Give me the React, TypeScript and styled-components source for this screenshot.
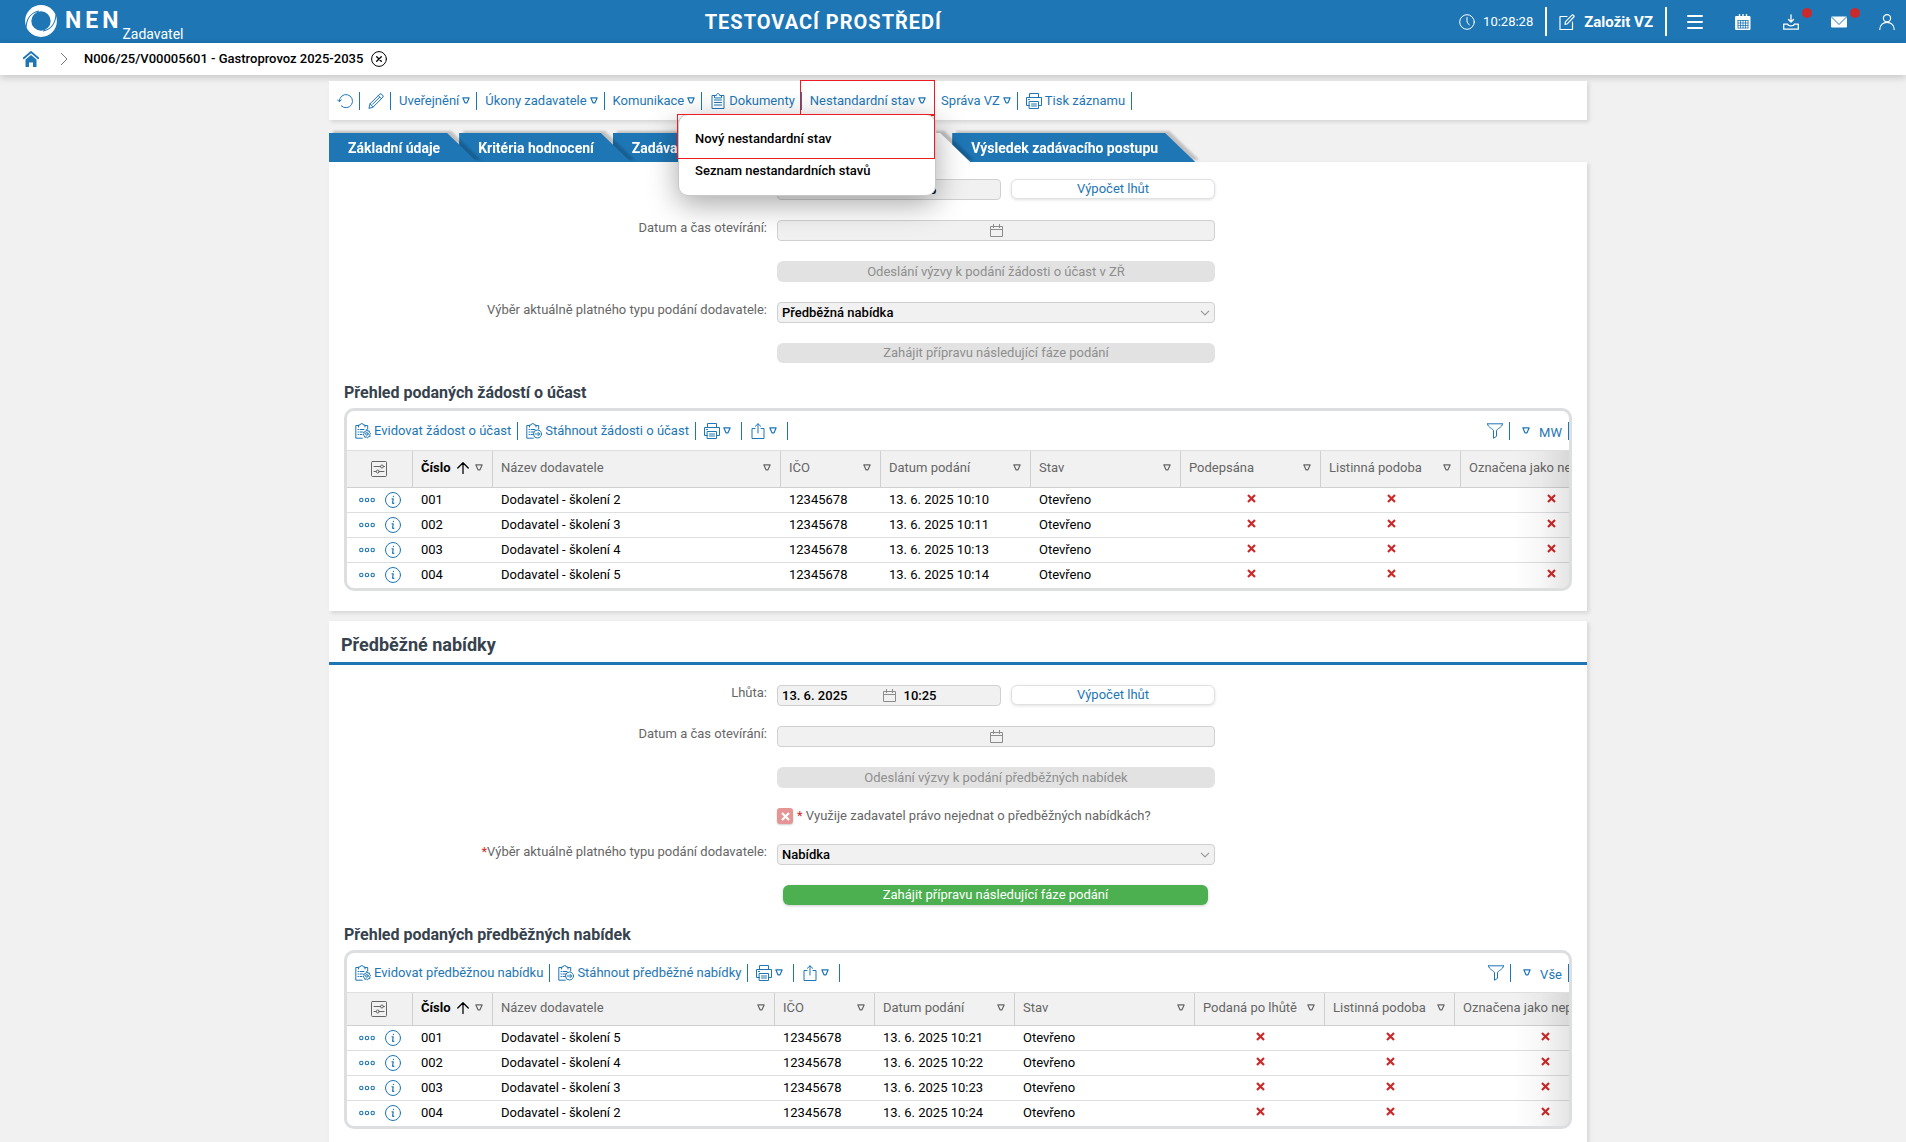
import React from 'react';
import styled, { createGlobalStyle, css } from 'styled-components';

const color = {
  blue: '#1e76b5',
  page: '#f1f1f1',
  line: '#dcdee0',
  text: '#666666',
  heading: '#36424d',
  red: '#cc2a2a',
  mark: '#ed1c24',
};

const GlobalStyle = createGlobalStyle`
  *, *::before, *::after { box-sizing: border-box; }
  body {
    margin: 0;
    background: ${color.page};
    font-family: Roboto, "Open Sans", sans-serif;
    font-size: 13px;
    line-height: 16px;
    color: ${color.text};
  }
  button, input, select { font: inherit; color: inherit; margin: 0; }
  svg { display: block; flex: none; }
`;

/* ---------- icons ---------- */

type IconProps = { size?: number; children: React.ReactNode; strokeWidth?: number };
const Icon = ({ size = 16, strokeWidth = 1, children }: IconProps) => (
  <svg
    width={size}
    height={size}
    viewBox="0 0 16 16"
    fill="none"
    stroke="currentColor"
    strokeWidth={strokeWidth}
    strokeLinecap="round"
    strokeLinejoin="round"
    aria-hidden="true"
  >
    {children}
  </svg>
);

const Triangle = () => (
  <svg width="8" height="7" viewBox="0 0 8 7" fill="none" stroke="currentColor" strokeWidth="1.2" strokeLinejoin="round" aria-hidden="true">
    <path d="M.9.9h6.2L5 5.8H3z" />
  </svg>
);

const ReloadIcon = () => (
  <Icon>
    <path d="M2.3 8.3a6.6 6.6 0 1 1 2 4.6M.5 6.8l1.8 1.8 2-1.6" />
  </Icon>
);
const PencilIcon = () => (
  <Icon>
    <path d="M1 15l1-4.2L12 .9c.9-.8 3.900 2.100 3.100 3.100L5.200 14zM10.300 2.600l3.100 3.100M2 10.800L5.200 14M11.500 4.300l-7 7" />
  </Icon>
);
const ClipboardIcon = () => (
  <Icon>
    <path d="M4.500 2.500H2v13h12v-13h-2.500M4.500 4.500v-2h1.800C6.300 0 9.700 0 9.700 2.500h1.800v2zM4.500 7h7M4.500 9.500h7M4.500 12h7" />
  </Icon>
);
const PrintIcon = () => (
  <Icon>
    <path d="M3.500 4.500v-4h9v4M3.500 12.500h-3v-8h15v8h-3M3.500 8.500h9v7h-9zM5.500 11h5M5.500 13h5M2.500 6.500h1" />
  </Icon>
);
const clipPath = 'M3.500 2.500H.8v12.700h6.500M10 2.500h2.700V6M3.500 4v-2h1.500C5 .1 8.500.1 8.500 2H10v2M3 6.500h.5M5 6.500h4M3 9h.5M5 9h2.500M3 11.500h.5M5 11.500h2';
const ClipboardGearIcon = () => (
  <Icon>
    <path d={clipPath} />
    <path d="M11.900 6.700l.8 1.400 1.600-.2.100 1.600 1.300.9-1 1.300.4 1.600-1.600.3-.9 1.300-1.300-1-1.500.5-.3-1.600-1.300-.9.900-1.300-.4-1.600 1.600-.2z" />
    <circle cx="11.900" cy="10.900" r="1.300" />
  </Icon>
);
const ClipboardArrowIcon = () => (
  <Icon>
    <path d={clipPath} />
    <circle cx="11.500" cy="11" r="4" />
    <path d="M9.300 11h4.200M12 9.300l1.700 1.700L12 12.700" />
  </Icon>
);
const ShareIcon = () => (
  <Icon>
    <path d="M5 5.500H2v10h12v-10h-3M8 10V.800M5.300 3.300L8 .800l2.700 2.500" />
  </Icon>
);
const FunnelIcon = () => (
  <Icon>
    <path d="M.5.800h15M.5 1c0 3.500 6 4.500 6 7v7.300l3-2V8c0-2.500 6-3.500 6-7" />
  </Icon>
);
const SettingsIcon = () => (
  <Icon>
    <rect x=".5" y=".5" width="15" height="15" rx="1" />
    <path d="M3 5.500h6.500M12.500 5.500h1M3 10.500h2M8.500 10.500h4.500" />
    <circle cx="11" cy="5.500" r="1.500" />
    <circle cx="6.800" cy="10.500" r="1.500" />
  </Icon>
);
const DotsIcon = () => (
  <Icon strokeWidth={1.1}>
    <circle cx="2.300" cy="8" r="1.700" />
    <circle cx="8" cy="8" r="1.700" />
    <circle cx="13.700" cy="8" r="1.700" />
  </Icon>
);
const InfoIcon = () => (
  <Icon>
    <circle cx="8" cy="8" r="7.500" />
    <path d="M7 6.800h1.200l-.6 4.200c0 .6.700.6 1.200.2M8.400 4.300v.3" strokeWidth="1.200" />
  </Icon>
);
const ArrowUpIcon = () => (
  <Icon size={12}>
    <path d="M8 15.500V1M1 8l7-7 7 7" strokeWidth="1.700" />
  </Icon>
);
const CrossIcon = () => (
  <svg width="9" height="9" viewBox="0 0 9 9" fill="none" stroke="currentColor" strokeWidth="2.200" role="img" aria-label="Ne">
    <path d="M1 1l7 7M8 1L1 8" />
  </svg>
);
const CalendarIcon = () => (
  <svg width="13" height="13" viewBox="0 0 13 13" fill="none" stroke="#8c8c8c" aria-hidden="true">
    <path d="M.5 2.500h12v10H.5zM.5 5.500h12M3.500 0v4M9.500 0v4" />
  </svg>
);
const ClockIcon = () => (
  <Icon>
    <circle cx="8" cy="8" r="7.300" />
    <path d="M8 3.500V8l2.300 3" />
  </Icon>
);
const ComposeIcon = () => (
  <Icon>
    <path d="M8 2.500H1v13h12.500V8M6 10.500l.5-2.800L13 1.200c1-.9 2.700.8 1.800 1.800L8.500 9.700z" strokeWidth="1.200" />
  </Icon>
);
const MenuIcon = () => (
  <Icon strokeWidth={2}>
    <path d="M1 2h14M1 8h14M1 14h14" />
  </Icon>
);
const CalendarSolidIcon = () => (
  <Icon>
    <path d="M1 2.500h14v13H1z" fill="currentColor" />
    <path d="M4.500.500v3M11.500.500v3M8 .500v3" strokeWidth="1.400" />
    <path d="M3 6.500h10M3 9h10M3 11.500h10M3 14h10M3 6.500V14M5.500 6.500V14M8 6.500V14M10.500 6.500V14M13 6.500V14" stroke={color.blue} strokeWidth=".8" />
  </Icon>
);
const InboxIcon = () => (
  <Icon>
    <path d="M8 .800v7M5.500 5.500L8 8l2.500-2.500M.700 10.200h4c.5 2.300 6.100 2.300 6.600 0h4v5H.700z" strokeWidth="1.300" />
  </Icon>
);
const MailIcon = () => (
  <Icon>
    <rect x="0" y="2.500" width="16" height="11" rx="1" fill="currentColor" stroke="none" />
    <path d="M.5 3l7.500 7.500L15.500 3" stroke={color.blue} />
  </Icon>
);
const UserIcon = () => (
  <Icon strokeWidth={1.2}>
    <circle cx="8" cy="4.200" r="3.600" />
    <path d="M.800 15.500c0-9.500 14.400-9.500 14.400 0" />
  </Icon>
);
const HomeIcon = () => (
  <Icon>
    <path d="M.7 7.200L8 1l7.300 6.200" strokeWidth="1.800" />
    <path d="M2.500 8.500L8 4l5.500 4.500V16H10v-4.500H6V16H2.500z" fill="currentColor" stroke="none" />
  </Icon>
);
const ChevronRight = () => (
  <svg width="8" height="14" viewBox="0 0 8 14" fill="none" stroke="#777" aria-hidden="true">
    <path d="M1 1l6 6-6 6" />
  </svg>
);
const CloseCircle = () => (
  <Icon>
    <circle cx="8" cy="8" r="7.400" />
    <path d="M5.700 5.700l4.600 4.600M10.300 5.700l-4.600 4.600" strokeWidth="1.300" />
  </Icon>
);
const LogoMark = () => (
  <svg width="32" height="32" viewBox="0 0 32 32" fill="none" aria-hidden="true">
    <circle cx="16" cy="16" r="12.800" stroke="#fff" strokeWidth="6.200" />
    <g stroke={color.blue} strokeWidth="1.100">
      <path d="M1 22.500C1.500 14 6 7.500 14 6" />
      <path d="M31 9.500C30.500 18 26 24.500 18 26" />
    </g>
  </svg>
);

/* ---------- shell ---------- */

const Shell = styled.div`
  display: flex;
  flex-direction: column;
  height: 100vh;
`;

const Header = styled.header`
  display: flex;
  align-items: center;
  flex: none;
  height: 43px;
  padding: 0 11px 0 25px;
  background: ${color.blue};
  color: #fff;
`;

const Brand = styled.a`
  display: flex;
  align-items: center;
  height: 100%;
  padding-bottom: 1px;
  color: inherit;
  text-decoration: none;
`;
const BrandName = styled.strong`
  margin-left: 8px;
  font-size: 23px;
  line-height: 28px;
  letter-spacing: 4px;
`;
const BrandRole = styled.span`
  align-self: flex-end;
  font-size: 14px;
  line-height: 16px;
`;
const EnvironmentTitle = styled.strong`
  flex: 1;
  padding-left: 16px;
  text-align: center;
  font-size: 20px;
  line-height: 24px;
  letter-spacing: 1px;
`;

const HeaderGroup = styled.div`
  display: flex;
  align-items: center;
  gap: 8px;
  height: 29px;
  padding: 0 12px;
  border-right: 2px solid #fff;
`;
const CreateButton = styled.button`
  display: flex;
  align-items: center;
  gap: 9px;
  padding: 0;
  border: 0;
  background: none;
  font-size: 15px;
  font-weight: 700;
  cursor: pointer;
`;
const HeaderIcons = styled.nav`
  display: flex;
  gap: 32px;
  padding-left: 20px;
`;
const HeaderIconButton = styled.button<{ $alert?: boolean }>`
  position: relative;
  padding: 0;
  border: 0;
  background: none;
  cursor: pointer;
  ${(p) =>
    p.$alert &&
    css`
      &::after {
        content: '';
        position: absolute;
        top: -6px;
        right: -13px;
        width: 10px;
        height: 10px;
        border-radius: 50%;
        background: ${color.red};
      }
    `}
`;

const Breadcrumbs = styled.nav`
  position: relative;
  z-index: 1;
  display: flex;
  align-items: center;
  flex: none;
  height: 32px;
  padding-left: 23px;
  background: #fff;
  box-shadow: 0 2px 8px rgba(0, 0, 0, 0.2);
  color: #000;
`;
const HomeLink = styled.a`
  margin-right: 21px;
  color: ${color.blue};
`;
const RecordLink = styled.a`
  margin: 0 8px 0 16px;
  font-weight: 500;
  color: inherit;
  text-decoration: none;
`;
const PlainIconButton = styled.button`
  padding: 0;
  border: 0;
  background: none;
  cursor: pointer;
`;

const Scroller = styled.main`
  flex: 1;
  min-height: 0;
  overflow-y: auto;
  scrollbar-width: none;
  padding: 6px 0 0 10px;
`;
const Column = styled.div`
  max-width: 1258px;
  margin: 0 auto;
`;

const Card = styled.section`
  background: #fff;
  box-shadow: 2px 2px 4px rgba(0, 0, 0, 0.12);
`;
const ContentCard = styled(Card)`
  padding: 17px 15px 20px;
  margin-bottom: 10px;
`;
const SectionCard = styled(Card)`
  padding-bottom: 20px;
`;
const SectionBody = styled.div`
  padding: 20px 15px 0;
`;
const SectionTitle = styled.h2`
  margin: 0;
  padding: 12px 12px 5px;
  border-bottom: 3px solid ${color.blue};
  font-size: 18px;
  line-height: 24px;
  font-weight: 700;
  color: ${color.heading};
`;

/* ---------- toolbars and menu ---------- */

const RecordToolbar = styled(Card)`
  position: relative;
  z-index: 10;
  display: flex;
  align-items: center;
  height: 39px;
`;
const ToolItem = styled.div<{ $wide?: boolean; $plain?: boolean }>`
  position: relative;
  display: flex;
  align-items: center;
  height: 18px;
  padding: 0 ${(p) => (p.$wide ? 10 : 6)}px 0 8px;
  border-right: 1px solid ${(p) => (p.$plain ? 'transparent' : color.blue)};
`;
const ToolButton = styled.button`
  display: flex;
  align-items: center;
  gap: 3px;
  padding: 0;
  border: 0;
  background: none;
  color: ${color.blue};
  white-space: nowrap;
  cursor: pointer;
`;

const MarkedToolItem = styled(ToolItem)`
  &::before {
    content: '';
    position: absolute;
    top: -12px;
    left: -2px;
    right: -3px;
    height: 36px;
    border: 1px solid ${color.mark};
    pointer-events: none;
  }
`;
const Menu = styled.ul`
  position: absolute;
  top: 22px;
  right: -4px;
  width: 258px;
  margin: 0;
  padding: 8px 0;
  list-style: none;
  background: #fff;
  border: 1px solid #c8c8c8;
  border-radius: 10px;
  box-shadow: 0 8px 30px rgba(0, 0, 0, 0.35);
`;
const MenuItem = styled.li<{ $marked?: boolean }>`
  position: relative;
  ${(p) =>
    p.$marked &&
    css`
      &::before {
        content: '';
        position: absolute;
        top: -9px;
        left: -2px;
        right: 0;
        height: 45px;
        border: 1px solid ${color.mark};
        pointer-events: none;
      }
    `}
`;
const MenuButton = styled.button`
  width: 100%;
  height: 32px;
  padding: 0 16px;
  border: 0;
  background: none;
  text-align: left;
  font-weight: 500;
  color: #000;
  cursor: pointer;
`;

/* ---------- tabs ---------- */

const Tabs = styled.div`
  display: flex;
  height: 42px;
  padding-top: 13px;
  overflow: hidden;
`;
const Tab = styled.button<{ $active?: boolean; $order: number }>`
  position: relative;
  z-index: ${(p) => p.$order};
  height: 29px;
  margin-right: -18px;
  padding: 0 37px 0 19px;
  border: 0;
  background: none;
  font-size: 14px;
  font-weight: 700;
  white-space: nowrap;
  color: ${(p) => (p.$active ? color.blue : '#fff')};
  filter: drop-shadow(4px -2px 1px rgba(0, 0, 0, 0.2));
  cursor: pointer;
  ${(p) => p.$active && 'width: 197px;'}

  &::before {
    content: '';
    position: absolute;
    inset: 0;
    z-index: -1;
    background: ${(p) => (p.$active ? '#fff' : color.blue)};
    clip-path: polygon(0 0, calc(100% - 30px) 0, 100% 100%, 0 100%);
  }
`;

/* ---------- form ---------- */

const Form = styled.form`
  display: flex;
  flex-direction: column;
  gap: 20px;
`;
const FormRow = styled.div`
  display: grid;
  grid-template-columns: minmax(0, 423px) minmax(0, 438px);
  column-gap: 10px;
`;
const FieldLabel = styled.label`
  text-align: right;
`;
const Required = styled.span`
  color: ${color.red};
`;
const FieldBody = styled.div`
  grid-column: 2;
  display: flex;
  gap: 10px;
`;
const DateBox = styled.div`
  flex: 1;
  display: flex;
  align-items: center;
  gap: 8px;
  height: 21px;
  min-width: 0;
  padding: 0 4px;
  border: 1px solid #d0d0d0;
  border-radius: 4px;
  background: ${color.page};
`;
const DateInput = styled.input`
  flex: 1;
  width: 0;
  min-width: 0;
  height: 19px;
  padding: 0;
  border: 0;
  background: none;
  font-weight: 500;
  color: #000;
`;
const OutlineButton = styled.button`
  width: 204px;
  height: 20px;
  padding: 0;
  border: 1px solid #dfe1e3;
  border-radius: 6px;
  background: #fff;
  box-shadow: 0 1px 3px rgba(0, 0, 0, 0.12);
  color: ${color.blue};
  cursor: pointer;
`;
const PhaseButton = styled.button<{ $compact?: boolean }>`
  flex: 1;
  height: ${(p) => (p.$compact ? 20 : 21)}px;
  padding: 0;
  border: 0;
  border-radius: 6px;
  background: #4caf50;
  color: #fff;
  cursor: pointer;
  &:disabled {
    background: #e2e2e2;
    color: #8f8f8f;
    cursor: default;
  }
  &:enabled {
    margin: 0 7px 0 6px;
    box-shadow: 0 1px 3px rgba(0, 0, 0, 0.2);
  }
`;
const SelectBox = styled.div`
  flex: 1;
  display: grid;
  align-items: center;
  color: #999;
  & > * {
    grid-area: 1 / 1;
  }
  & > svg {
    justify-self: end;
    margin-right: 5px;
    pointer-events: none;
  }
`;
const Select = styled.select`
  appearance: none;
  width: 100%;
  height: 21px;
  padding: 0 20px 0 4px;
  border: 1px solid #d0d0d0;
  border-radius: 4px;
  background: ${color.page};
  font-weight: 500;
  color: #000;
`;
const CheckLabel = styled.label`
  display: flex;
  align-items: center;
  gap: 4px;
`;
const CheckBox = styled.span`
  display: grid;
  place-items: center;
  color: #fff;
  & > * {
    grid-area: 1 / 1;
  }
`;
const CheckInput = styled.input`
  appearance: none;
  width: 16px;
  height: 16px;
  border-radius: 3px;
  background: #e59595;
  box-shadow: 0 1px 2px rgba(0, 0, 0, 0.2);
`;

/* ---------- data grid ---------- */

const GridTitle = styled.h3`
  margin: 20px 0 5px;
  font-size: 16px;
  line-height: 20px;
  font-weight: 700;
  color: ${color.heading};
`;
const GridBox = styled.div`
  border: 3px solid ${color.line};
  border-radius: 10px;
  overflow: hidden;
`;
const GridToolbar = styled.div`
  display: flex;
  align-items: center;
  height: 39px;
`;
const Spacer = styled.div`
  flex: 1;
`;
const ViewButton = styled(ToolButton)`
  gap: 9px;
  padding-left: 4px;
  & > span {
    padding-top: 4px;
  }
`;
const TableFrame = styled.div`
  position: relative;
  border-top: 1px solid ${color.line};
  &::after {
    content: '';
    position: absolute;
    inset: 0 0 0 auto;
    width: 56px;
    background: linear-gradient(to right, rgba(0, 0, 0, 0), rgba(0, 0, 0, 0.03) 50%, rgba(0, 0, 0, 0.1));
    pointer-events: none;
  }
`;
const TableScroll = styled.div`
  overflow-x: auto;
  scrollbar-width: none;
`;
const Table = styled.table<{ $minWidth: number }>`
  width: 100%;
  min-width: ${(p) => p.$minWidth}px;
  table-layout: fixed;
  border-collapse: separate;
  border-spacing: 0;
`;
const HeadCell = styled.th<{ $height: number; $sorted?: boolean }>`
  height: ${(p) => p.$height}px;
  padding: 0 9px 0 8px;
  border-right: 1px solid #d0d0d0;
  border-bottom: 1px solid #d0d0d0;
  background: ${color.page};
  font-weight: ${(p) => (p.$sorted ? 700 : 400)};
  color: ${(p) => (p.$sorted ? '#000' : color.text)};
  text-align: left;
  white-space: nowrap;
`;
const HeadContent = styled.div`
  display: flex;
  align-items: center;
  justify-content: space-between;
  padding-bottom: 3px;
  & > button {
    color: ${color.text};
  }
`;
const IconCell = styled.div`
  display: flex;
  justify-content: center;
`;
const Cell = styled.td<{ $center?: boolean }>`
  height: 25px;
  padding: 0 8px;
  border-bottom: 1px solid ${color.line};
  color: ${(p) => (p.$center ? color.red : '#000')};
  white-space: nowrap;
  & > svg {
    margin: 0 auto 3px;
  }
  tr:last-child > & {
    border-bottom-color: transparent;
  }
`;
const RowActions = styled.div`
  display: flex;
  gap: 10px;
  padding-left: 4px;
  color: ${color.blue};
`;

/* ---------- parts ---------- */

const DateTimeField = ({ id, date = '', time = '' }: { id: string; date?: string; time?: string }) => (
  <DateBox>
    <DateInput id={id} value={date} readOnly />
    <CalendarIcon />
    <DateInput aria-label="Čas" value={time} readOnly />
  </DateBox>
);

const SelectField = ({ id, value }: { id: string; value: string }) => (
  <SelectBox>
    <Select id={id} defaultValue={value}>
      <option>{value}</option>
    </Select>
    <svg width="10" height="6" viewBox="0 0 10 6" fill="none" stroke="currentColor" strokeWidth="1.200" aria-hidden="true">
      <path d="M1 .800l4 4 4-4" />
    </svg>
  </SelectBox>
);

type ColumnDef = { title: string; width?: number; cross?: boolean };
type GridProps = {
  title: string;
  register: string;
  download: string;
  view: string;
  headHeight: number;
  minWidth: number;
  columns: ColumnDef[];
  rows: string[][];
};

const DataGrid = ({ title, register, download, view, headHeight, minWidth, columns, rows }: GridProps) => (
  <>
    <GridTitle>{title}</GridTitle>
    <GridBox>
      <GridToolbar>
        <ToolItem>
          <ToolButton type="button"><ClipboardGearIcon />{register}</ToolButton>
        </ToolItem>
        <ToolItem>
          <ToolButton type="button"><ClipboardArrowIcon />{download}</ToolButton>
        </ToolItem>
        <ToolItem $wide>
          <ToolButton type="button" aria-label="Tisk"><PrintIcon /><Triangle /></ToolButton>
        </ToolItem>
        <ToolItem $wide>
          <ToolButton type="button" aria-label="Export"><ShareIcon /><Triangle /></ToolButton>
        </ToolItem>
        <Spacer />
        <ToolItem>
          <ToolButton type="button" aria-label="Filtr"><FunnelIcon /></ToolButton>
        </ToolItem>
        <ToolItem>
          <ViewButton type="button"><Triangle /><span>{view}</span></ViewButton>
        </ToolItem>
      </GridToolbar>
      <TableFrame>
        <TableScroll>
          <Table $minWidth={minWidth}>
            <colgroup>
              <col width={66} />
              {columns.map((c) => (
                <col key={c.title} width={c.width} />
              ))}
            </colgroup>
            <thead>
              <tr>
                <HeadCell $height={headHeight}>
                  <IconCell><PlainIconButton type="button" aria-label="Nastavení sloupců"><SettingsIcon /></PlainIconButton></IconCell>
                </HeadCell>
                {columns.map((c, i) => (
                  <HeadCell key={c.title} $height={headHeight} $sorted={i === 0}>
                    <HeadContent>
                      {c.title}
                      {i === 0 && <ArrowUpIcon />}
                      <PlainIconButton type="button" aria-label={`Filtr ${c.title}`}><Triangle /></PlainIconButton>
                    </HeadContent>
                  </HeadCell>
                ))}
              </tr>
            </thead>
            <tbody>
              {rows.map((row) => (
                <tr key={row[0]}>
                  <Cell>
                    <RowActions>
                      <DotsIcon />
                      <InfoIcon />
                    </RowActions>
                  </Cell>
                  {columns.map((c, i) => (
                    <Cell key={c.title} $center={c.cross}>{c.cross ? <CrossIcon /> : row[i]}</Cell>
                  ))}
                </tr>
              ))}
            </tbody>
          </Table>
        </TableScroll>
      </TableFrame>
    </GridBox>
  </>
);

const requestColumns: ColumnDef[] = [
  { title: 'Číslo', width: 80 },
  { title: 'Název dodavatele' },
  { title: 'IČO', width: 100 },
  { title: 'Datum podání', width: 150 },
  { title: 'Stav', width: 150 },
  { title: 'Podepsána', width: 140, cross: true },
  { title: 'Listinná podoba', width: 140, cross: true },
  { title: 'Označena jako nepodaná', width: 180, cross: true },
];
const requestRows = [
  ['001', 'Dodavatel - školení 2', '12345678', '13. 6. 2025 10:10', 'Otevřeno'],
  ['002', 'Dodavatel - školení 3', '12345678', '13. 6. 2025 10:11', 'Otevřeno'],
  ['003', 'Dodavatel - školení 4', '12345678', '13. 6. 2025 10:13', 'Otevřeno'],
  ['004', 'Dodavatel - školení 5', '12345678', '13. 6. 2025 10:14', 'Otevřeno'],
];
const offerColumns: ColumnDef[] = [
  { title: 'Číslo', width: 80 },
  { title: 'Název dodavatele' },
  { title: 'IČO', width: 100 },
  { title: 'Datum podání', width: 140 },
  { title: 'Stav', width: 180 },
  { title: 'Podaná po lhůtě', width: 130, cross: true },
  { title: 'Listinná podoba', width: 130, cross: true },
  { title: 'Označena jako nepodaná', width: 180, cross: true },
];
const offerRows = [
  ['001', 'Dodavatel - školení 5', '12345678', '13. 6. 2025 10:21', 'Otevřeno'],
  ['002', 'Dodavatel - školení 4', '12345678', '13. 6. 2025 10:22', 'Otevřeno'],
  ['003', 'Dodavatel - školení 3', '12345678', '13. 6. 2025 10:23', 'Otevřeno'],
  ['004', 'Dodavatel - školení 2', '12345678', '13. 6. 2025 10:24', 'Otevřeno'],
];

const App = () => (
  <>
    <GlobalStyle />
    <Shell>
      <Header>
        <Brand href="#">
          <LogoMark />
          <BrandName>NEN</BrandName>
          <BrandRole>Zadavatel</BrandRole>
        </Brand>
        <EnvironmentTitle>TESTOVACÍ PROSTŘEDÍ</EnvironmentTitle>
        <HeaderGroup>
          <ClockIcon />
          <time>10:28:28</time>
        </HeaderGroup>
        <HeaderGroup>
          <CreateButton type="button"><ComposeIcon />Založit VZ</CreateButton>
        </HeaderGroup>
        <HeaderIcons>
          <HeaderIconButton type="button" aria-label="Menu"><MenuIcon /></HeaderIconButton>
          <HeaderIconButton type="button" aria-label="Kalendář"><CalendarSolidIcon /></HeaderIconButton>
          <HeaderIconButton type="button" aria-label="Stažené soubory" $alert><InboxIcon /></HeaderIconButton>
          <HeaderIconButton type="button" aria-label="Zprávy" $alert><MailIcon /></HeaderIconButton>
          <HeaderIconButton type="button" aria-label="Uživatel"><UserIcon /></HeaderIconButton>
        </HeaderIcons>
      </Header>

      <Breadcrumbs>
        <HomeLink href="#" aria-label="Domů"><HomeIcon /></HomeLink>
        <ChevronRight />
        <RecordLink href="#">N006/25/V00005601 - Gastroprovoz 2025-2035</RecordLink>
        <PlainIconButton type="button" aria-label="Zavřít"><CloseCircle /></PlainIconButton>
      </Breadcrumbs>

      <Scroller>
        <Column>
          <RecordToolbar>
            <ToolItem><ToolButton type="button" aria-label="Obnovit"><ReloadIcon /></ToolButton></ToolItem>
            <ToolItem><ToolButton type="button" aria-label="Upravit"><PencilIcon /></ToolButton></ToolItem>
            <ToolItem><ToolButton type="button">Uveřejnění<Triangle /></ToolButton></ToolItem>
            <ToolItem><ToolButton type="button">Úkony zadavatele<Triangle /></ToolButton></ToolItem>
            <ToolItem><ToolButton type="button">Komunikace<Triangle /></ToolButton></ToolItem>
            <ToolItem><ToolButton type="button"><ClipboardIcon />Dokumenty</ToolButton></ToolItem>
            <MarkedToolItem $plain>
              <ToolButton type="button" aria-expanded="true">Nestandardní stav<Triangle /></ToolButton>
              <Menu>
                <MenuItem $marked><MenuButton type="button">Nový nestandardní stav</MenuButton></MenuItem>
                <MenuItem><MenuButton type="button">Seznam nestandardních stavů</MenuButton></MenuItem>
              </Menu>
            </MarkedToolItem>
            <ToolItem><ToolButton type="button">Správa VZ<Triangle /></ToolButton></ToolItem>
            <ToolItem><ToolButton type="button"><PrintIcon />Tisk záznamu</ToolButton></ToolItem>
          </RecordToolbar>

          <Tabs role="tablist">
            <Tab type="button" role="tab" $order={5}>Základní údaje</Tab>
            <Tab type="button" role="tab" $order={4}>Kritéria hodnocení</Tab>
            <Tab type="button" role="tab" $order={3}>Zadávací podmínky</Tab>
            <Tab type="button" role="tab" aria-selected="true" $active $order={2}>Podání</Tab>
            <Tab type="button" role="tab" $order={1}>Výsledek zadávacího postupu</Tab>
          </Tabs>

          <ContentCard>
            <Form>
              <FormRow>
                <FieldLabel htmlFor="request-deadline">Lhůta:</FieldLabel>
                <FieldBody>
                  <DateTimeField id="request-deadline" date="13. 6. 2025" time="10:15" />
                  <OutlineButton type="button">Výpočet lhůt</OutlineButton>
                </FieldBody>
              </FormRow>
              <FormRow>
                <FieldLabel htmlFor="request-opening">Datum a čas otevírání:</FieldLabel>
                <FieldBody><DateTimeField id="request-opening" /></FieldBody>
              </FormRow>
              <FormRow>
                <FieldBody><PhaseButton type="button" disabled>Odeslání výzvy k podání žádosti o účast v ZŘ</PhaseButton></FieldBody>
              </FormRow>
              <FormRow>
                <FieldLabel htmlFor="request-type">Výběr aktuálně platného typu podání dodavatele:</FieldLabel>
                <FieldBody><SelectField id="request-type" value="Předběžná nabídka" /></FieldBody>
              </FormRow>
              <FormRow>
                <FieldBody><PhaseButton type="button" $compact disabled>Zahájit přípravu následující fáze podání</PhaseButton></FieldBody>
              </FormRow>
            </Form>
            <DataGrid
              title="Přehled podaných žádostí o účast"
              register="Evidovat žádost o účast"
              download="Stáhnout žádosti o účast"
              view="MW"
              headHeight={37}
              minWidth={1294}
              columns={requestColumns}
              rows={requestRows}
            />
          </ContentCard>

          <SectionCard>
            <SectionTitle>Předběžné nabídky</SectionTitle>
            <SectionBody>
              <Form>
                <FormRow>
                  <FieldLabel htmlFor="offer-deadline">Lhůta:</FieldLabel>
                  <FieldBody>
                    <DateTimeField id="offer-deadline" date="13. 6. 2025" time="10:25" />
                    <OutlineButton type="button">Výpočet lhůt</OutlineButton>
                  </FieldBody>
                </FormRow>
                <FormRow>
                  <FieldLabel htmlFor="offer-opening">Datum a čas otevírání:</FieldLabel>
                  <FieldBody><DateTimeField id="offer-opening" /></FieldBody>
                </FormRow>
                <FormRow>
                  <FieldBody><PhaseButton type="button" disabled>Odeslání výzvy k podání předběžných nabídek</PhaseButton></FieldBody>
                </FormRow>
                <FormRow>
                  <FieldBody>
                    <CheckLabel>
                      <CheckBox>
                        <CheckInput type="checkbox" />
                        <CrossIcon />
                      </CheckBox>
                      <span><Required>*</Required> Využije zadavatel právo nejednat o předběžných nabídkách?</span>
                    </CheckLabel>
                  </FieldBody>
                </FormRow>
                <FormRow>
                  <FieldLabel htmlFor="offer-type"><Required>*</Required>Výběr aktuálně platného typu podání dodavatele:</FieldLabel>
                  <FieldBody><SelectField id="offer-type" value="Nabídka" /></FieldBody>
                </FormRow>
                <FormRow>
                  <FieldBody><PhaseButton type="button" $compact>Zahájit přípravu následující fáze podání</PhaseButton></FieldBody>
                </FormRow>
              </Form>
              <DataGrid
                title="Přehled podaných předběžných nabídek"
                register="Evidovat předběžnou nabídku"
                download="Stáhnout předběžné nabídky"
                view="Vše"
                headHeight={33}
                minWidth={1288}
                columns={offerColumns}
                rows={offerRows}
              />
            </SectionBody>
          </SectionCard>
        </Column>
      </Scroller>
    </Shell>
  </>
);

export default App;
